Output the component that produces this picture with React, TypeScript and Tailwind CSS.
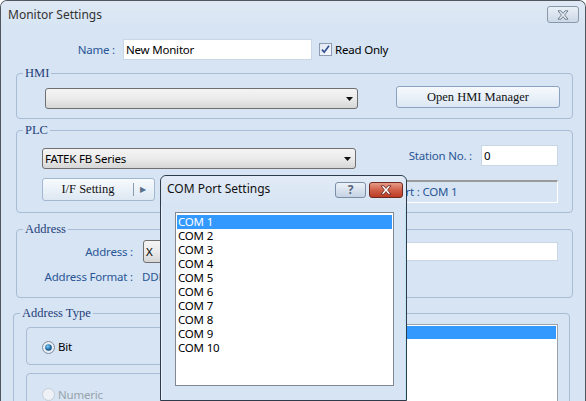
import type { ReactNode } from 'react'

// Win7 "Monitor Settings" dialog with the COM port picker opened on top.

const COM_PORTS = ['COM 1', 'COM 2', 'COM 3', 'COM 4', 'COM 5', 'COM 6', 'COM 7', 'COM 8', 'COM 9', 'COM 10']

function CloseGlyph({ fill, stroke }: { fill: string; stroke: string }) {
  return (
    <svg width="12" height="10" viewBox="0 0 12 10" aria-hidden="true">
      <path
        d="M1 0.8h3l2 2.6 2-2.6h3L7.6 5 11 9.2H8L6 6.6 4 9.2H1L4.4 5z"
        fill={fill}
        stroke={stroke}
        strokeWidth="0.9"
        strokeLinejoin="round"
      />
    </svg>
  )
}

function Arrow() {
  return (
    <svg width="7" height="4" viewBox="0 0 7 4" aria-hidden="true">
      <path d="M0 0h7L3.5 4z" fill="#111" />
    </svg>
  )
}

function Group({ label, className, children }: { label: string; className: string; children: ReactNode }) {
  return (
    <div className={`relative rounded-[4px] border border-[#a8bcd5] ${className}`}>
      <span className="absolute left-[6px] top-[-9px] bg-[#d6e4f3] px-[2px] font-['Liberation_Serif',serif] text-[12.5px] leading-[16px] tracking-normal text-[#1f3d7a]">
        {label}
      </span>
      {children}
    </div>
  )
}

function Combo({ text, className }: { text?: string; className: string }) {
  return (
    <div
      className={`flex items-center justify-between rounded-[3px] border border-[#707070] bg-gradient-to-b from-[#f4f4f4] via-[#ebebeb] to-[#d6d6d6] pl-[2px] pr-[4px] ${className}`}
    >
      <span className="leading-[16px]">{text}</span>
      <Arrow />
    </div>
  )
}

function Checkbox() {
  return (
    <svg width="13" height="13" viewBox="0 0 13 13" className="ml-[7px]" aria-hidden="true">
      <defs>
        <linearGradient id="cb" x1="0" y1="0" x2="1" y2="1">
          <stop offset="0" stopColor="#dfe6ef" />
          <stop offset="1" stopColor="#f8fbfe" />
        </linearGradient>
      </defs>
      <rect x="0.5" y="0.5" width="12" height="12" fill="url(#cb)" stroke="#8c9bb1" />
      <path d="M3 6.6l2.2 2.6L10 2.8" fill="none" stroke="#2f4f92" strokeWidth="1.7" />
    </svg>
  )
}

function Radio({ checked }: { checked?: boolean }) {
  return (
    <svg width="13" height="13" viewBox="0 0 13 13" aria-hidden="true">
      <defs>
        <radialGradient id="rdot" cx="0.4" cy="0.35" r="0.7">
          <stop offset="0" stopColor="#8fd0f2" />
          <stop offset="0.5" stopColor="#2a7fba" />
          <stop offset="1" stopColor="#0f3f6d" />
        </radialGradient>
      </defs>
      <circle cx="6.5" cy="6.5" r="6" fill={checked ? '#e9eef4' : '#eef2f6'} stroke={checked ? '#7d8b9b' : '#c4ccd6'} />
      {checked && <circle cx="6.5" cy="6.5" r="3.3" fill="url(#rdot)" />}
    </svg>
  )
}

export default function App() {
  return (
    <div className="relative h-[401px] w-[586px] overflow-hidden rounded-t-[7px] border border-b-0 border-[#4f565e] bg-[#d6e4f3] font-['Noto_Sans',sans-serif] text-[11.5px] tracking-[-0.2px] text-black">
      {/* title bar */}
      <div className="flex h-[29px] items-start justify-between bg-gradient-to-b from-[#dfe9f5] to-[#d6e4f3] pl-[7px] pr-[6px]">
        <span className="mt-[5px] text-[12px] leading-[18px] tracking-normal text-[#333]">Monitor Settings</span>
        <button
          type="button"
          className="mt-[5px] flex h-[17px] w-[32px] items-center justify-center rounded-[3px] border border-[#8a98ab] bg-gradient-to-b from-[#eaf0f7] to-[#ccd8e7]"
        >
          <CloseGlyph fill="#e6ebf1" stroke="#687789" />
        </button>
      </div>

      {/* name row */}
      <div className="mt-[9px] flex h-[21px] items-center">
        <span className="w-[114px] text-right text-[#2a5696]">Name :</span>
        <div className="ml-[8px] flex h-[21px] w-[189px] items-center border border-[#c9d6e5] bg-white pl-[2px]">New Monitor</div>
        <Checkbox />
        <span className="ml-[3px]">Read Only</span>
      </div>

      <Group label="HMI" className="ml-[15px] mt-[13px] h-[46px] w-[557px]">
        <div className="flex items-start pl-[28px] pt-[12px]">
          <Combo className="mt-[2px] h-[21px] w-[313px]" />
          <button
            type="button"
            className="ml-[38px] h-[22px] w-[164px] rounded-[3px] border border-[#8aa2c2] bg-gradient-to-b from-[#f6f9fd] to-[#dce7f3] font-['Liberation_Serif',serif] text-[12.5px] tracking-normal text-[#111]"
          >
            Open HMI Manager
          </button>
        </div>
      </Group>

      <Group label="PLC" className="ml-[15px] mt-[11px] h-[83px] w-[557px]">
        <div className="flex items-start pl-[25px] pt-[14px]">
          <Combo text="FATEK FB Series" className="mt-[3px] h-[21px] w-[314px]" />
          <div className="flex h-[21px] items-center">
            <span className="w-[116px] text-right text-[#2a5696]">Station No. :</span>
            <div className="ml-[9px] flex h-[21px] w-[77px] items-center border border-[#c9d6e5] bg-white pl-[2px]">0</div>
          </div>
        </div>
        <div className="mt-[9px] flex items-start pl-[25px]">
          <button
            type="button"
            className="flex h-[23px] w-[113px] items-center rounded-[3px] border border-[#a3b7d0] bg-gradient-to-b from-[#f7fafd] to-[#dde8f3] font-['Liberation_Serif',serif] text-[12.5px] tracking-normal text-[#111]"
          >
            <span className="w-[90px] text-center">I/F Setting</span>
            <span className="h-[13px] border-l border-[#8a9bb0]" />
            <span className="ml-[6px] text-[8px] text-[#5a6f8c]">▶</span>
          </button>
          <div className="ml-[229px] mt-[2px] flex h-[23px] w-[174px] items-center border-b border-l border-r border-t-2 border-b-white border-l-[#a0a0a0] border-r-white border-t-[#9a9a9a] pl-[7px] text-[#2a5696]">
            Port : COM 1
          </div>
        </div>
      </Group>

      <Group label="Address" className="ml-[15px] mt-[16px] h-[69px] w-[557px]">
        <div className="flex items-start pt-[10px]">
          <span className="flex h-[23px] w-[116px] items-center justify-end text-[#2a5696]">Address :</span>
          <Combo text="X" className="ml-[10px] h-[23px] w-[60px]" />
          <div className="ml-[4px] mt-[2px] h-[19px] w-[351px] border border-[#c9d6e5] bg-white" />
        </div>
        <div className="mt-[6px] flex h-[16px] items-center">
          <span className="w-[116px] text-right text-[#2a5696]">Address Format :</span>
          <span className="ml-[9px] text-[#2a5696]">DDDDD</span>
        </div>
      </Group>

      <Group label="Address Type" className="ml-[12px] mt-[15px] h-[120px] w-[557px]">
        <div className="flex items-start pl-[12px] pt-[10px]">
          <div className="mt-[3px] flex flex-col">
            <div className="flex h-[38px] w-[250px] items-center rounded-[4px] border border-[#a8bcd5] pl-[15px] pt-[2px]">
              <Radio checked />
              <span className="ml-[3px]">Bit</span>
            </div>
            <div className="mt-[8px] flex h-[40px] w-[250px] items-start rounded-[4px] border border-[#a8bcd5] pl-[15px] pt-[14px]">
              <Radio />
              <span className="ml-[3px] leading-[13px] text-[#9aa3ad]">Numeric</span>
            </div>
          </div>
          <div className="ml-auto mr-[11px] h-[100px] w-[240px] border border-[#9ca3ab] bg-white">
            <div className="mx-[1px] mt-[1px] h-[13px] bg-[#3399ff]" />
          </div>
        </div>
      </Group>

      {/* COM port picker dialog on top */}
      <div className="absolute left-[159px] top-[174px] flex h-[226px] w-[247px] flex-col rounded-t-[6px] border border-[#2f3b4a] bg-[#d6e4f3] shadow-[inset_-1px_0_0_#bfe6f7,inset_1px_0_0_#e9f2fb]">
        <div className="flex h-[30px] items-start rounded-t-[6px] bg-gradient-to-b from-[#e2ebf6] to-[#d6e4f3] pl-[6px] pr-[3px]">
          <span className="mt-[4px] text-[12px] leading-[18px] tracking-normal text-[#111]">COM Port Settings</span>
          <button
            type="button"
            className="ml-auto mt-[6px] flex h-[16px] w-[31px] items-center justify-center rounded-[3px] border border-[#7c8ea6] bg-gradient-to-b from-[#edf2f8] to-[#c5d3e4] text-[12px] font-bold leading-none text-[#56657a]"
          >
            ?
          </button>
          <button
            type="button"
            className="ml-[3px] mt-[6px] flex h-[16px] w-[34px] items-center justify-center rounded-[3px] border border-[#6d2a20] bg-gradient-to-b from-[#e79a88] via-[#d0604a] to-[#bb3a24]"
          >
            <CloseGlyph fill="#fff" stroke="#6b2b22" />
          </button>
        </div>
        <div className="ml-[14px] mt-[6px] h-[174px] w-[219px] border border-[#828790] bg-white pt-[2px]">
          {COM_PORTS.map((p, i) => (
            <div
              key={p}
              className={`mx-[1px] h-[14px] pl-[1px] leading-[14px] ${i === 0 ? 'bg-[#3399ff] text-white' : 'text-black'}`}
            >
              {p}
            </div>
          ))}
        </div>
      </div>
    </div>
  )
}
